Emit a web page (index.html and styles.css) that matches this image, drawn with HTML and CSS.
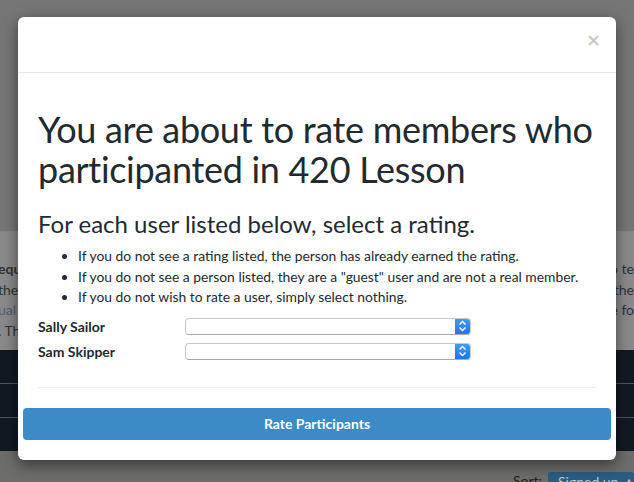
FILE: index.html
```html
<!DOCTYPE html>
<html>
<head>
<meta charset="utf-8">
<link rel="stylesheet" href="styles.css">
</head>
<body>
<div class="page">
  <div class="top"></div>
  <div class="band">
    <div class="band-col left">
      <p><b>equ</b></p>
      <p>the</p>
      <p class="link">ual</p>
      <p>. Th</p>
    </div>
    <div class="band-col right">
      <p>o te</p>
      <p>the</p>
      <p>e fo</p>
    </div>
  </div>
  <div class="rows">
    <div class="row"></div>
    <div class="row"></div>
    <div class="row"></div>
  </div>
  <div class="bottom">
    <span class="sort">Sort:</span>
    <span class="sortbtn">Signed up ▲</span>
  </div>
</div>

<div class="modal">
  <div class="modal-header">
    <span class="close">×</span>
  </div>
  <div class="modal-body">
    <h1>You are about to rate members who participanted in 420 Lesson</h1>
    <h3>For each user listed below, select a rating.</h3>
    <ul>
      <li>If you do not see a rating listed, the person has already earned the rating.</li>
      <li>If you do not see a person listed, they are a "guest" user and are not a real member.</li>
      <li>If you do not wish to rate a user, simply select nothing.</li>
    </ul>
    <div class="rate-row">
      <label>Sally Sailor</label>
      <div class="select"><span class="stepper"><svg width="9" height="12" viewBox="0 0 9 12"><path d="M1.5 4.5 L4.5 1.5 L7.5 4.5 M1.5 7.5 L4.5 10.5 L7.5 7.5" fill="none" stroke="#fff" stroke-width="1.5"/></svg></span></div>
    </div>
    <div class="rate-row">
      <label>Sam Skipper</label>
      <div class="select"><span class="stepper"><svg width="9" height="12" viewBox="0 0 9 12"><path d="M1.5 4.5 L4.5 1.5 L7.5 4.5 M1.5 7.5 L4.5 10.5 L7.5 7.5" fill="none" stroke="#fff" stroke-width="1.5"/></svg></span></div>
    </div>
    <hr>
  </div>
  <div class="modal-footer">
    <button class="btn">Rate Participants</button>
  </div>
</div>
</body>
</html>
```

FILE: styles.css
```css
* { box-sizing: border-box; }
html, body { margin: 0; padding: 0; }
body {
  width: 634px;
  height: 482px;
  overflow: hidden;
  font-family: Lato, "Noto Sans", sans-serif;
  background: #767676;
  position: relative;
}
.page { width: 634px; height: 482px; display: flex; flex-direction: column; }
.top { height: 231px; background: #767676; }
.band {
  height: 119px;
  background: #8a8a8a;
  display: flex;
  justify-content: space-between;
  font-size: 14px;
  color: #2f3337;
  padding-top: 28px;
}
.band-col p { margin: 0; line-height: 20.5px; }
.band-col.left { margin-left: -2px; }
.band-col .link { color: #4a5f75; }
.band-col.right { text-align: right; }
.rows { display: flex; flex-direction: column; gap: 1px; background: #50565c; }
.row { height: 33px; background: #121a21; }
.bottom {
  flex: 1;
  background: #6d6d6b;
  display: flex;
  align-items: flex-end;
  justify-content: flex-end;
  font-size: 14px;
  color: #1e1e1e;
}
.sort { margin-right: 6px; line-height: 14px; margin-bottom: -6px; }
.sortbtn {
  background: #2c5c83;
  color: #b8c8d6;
  padding: 2px 6px 0 10px;
  border-radius: 3px 3px 0 0;
  height: 10px;
  line-height: 16px;
  overflow: hidden;
  white-space: nowrap;
  width: 86px;
}

.modal {
  position: absolute;
  left: 18px;
  top: 17px;
  width: 598px;
  height: 443px;
  background: #fff;
  border-radius: 6px;
  box-shadow: 0 5px 15px rgba(0,0,0,0.5);
  display: flex;
  flex-direction: column;
  color: #222a30;
}
.modal-header {
  height: 56px;
  border-bottom: 1px solid #e5e5e5;
  display: flex;
  justify-content: flex-end;
  align-items: flex-start;
  padding: 11px 15px 0 0;
}
.close {
  font-family: "DejaVu Sans", sans-serif;
  font-weight: bold;
  font-size: 18px;
  color: #c8c8c8;
  line-height: 24px;
}
.modal-body { padding: 0 20px; }
h1 {
  font-size: 36px;
  font-weight: 400;
  line-height: 40px;
  margin: 36px 0 0 0;
  letter-spacing: -0.3px;
}
h3 {
  font-size: 24px;
  font-weight: 400;
  margin: 20px 0 0 0;
  line-height: 30px;
}
ul {
  margin: 7px 0 0 0;
  padding-left: 40px;
  font-size: 13.85px;
  line-height: 20.5px;
}
.rate-row {
  display: flex;
  align-items: center;
  height: 25px;
}
ul + .rate-row { margin-top: 6px; }
label {
  width: 147px;
  font-weight: bold;
  font-size: 14px;
}
.select {
  width: 286px;
  height: 17px;
  border: 1px solid #c9c9c9;
  border-bottom-color: #aaa;
  border-radius: 4px;
  background: #fff;
  display: flex;
  justify-content: flex-end;
  overflow: hidden;
}
.stepper {
  width: 15px;
  height: 100%;
  background: linear-gradient(#3f9bf8, #1a78f0);
  display: flex;
  align-items: center;
  justify-content: center;
}
.stepper svg { display: block; }
hr {
  border: 0;
  border-top: 1px solid #eee;
  margin: 23px 0 0 0;
}
.modal-footer { padding: 20px 5px 0 5px; }
.btn {
  width: 100%;
  height: 32px;
  background: #3c8bc6;
  border: 0;
  border-radius: 4px;
  color: #fff;
  font-family: Lato, "Noto Sans", sans-serif;
  font-weight: bold;
  font-size: 14px;
}
```
